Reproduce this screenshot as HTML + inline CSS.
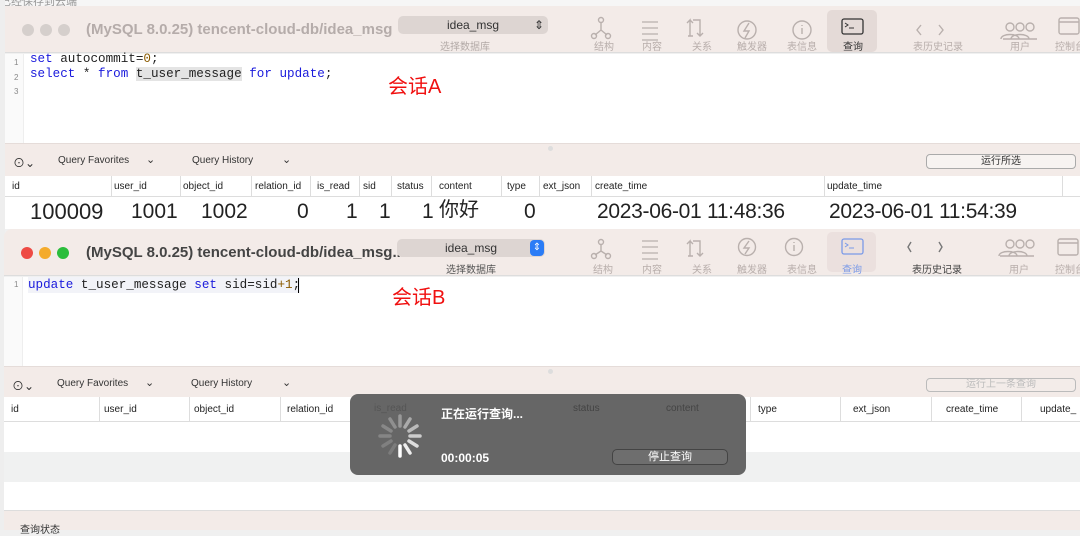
<!DOCTYPE html>
<html><head><meta charset="utf-8"><style>
*{margin:0;padding:0;box-sizing:border-box}
body{width:1080px;height:530px;overflow:hidden;background:#f0f0f0;position:relative;font-family:"Liberation Sans","Noto Sans CJK SC",sans-serif;color:#222}
.a{position:absolute}
.tb{background:#f3ebe8}
.mono{font-family:"Liberation Mono",monospace;font-size:12.6px}
.kw{color:#1a1adc}
.num{color:#8a5a00}
.lbl{font-size:10px;color:#b8aeab;text-align:center;width:50px}
.hdr{font-size:10px;color:#222;top:0;line-height:21px}
.sep{border-left:1px solid #ddd;height:21px;top:0}
.ic{stroke:#b9b0ad;fill:none;stroke-width:1.4}
.big{font-size:21px;color:#222;top:3px}
</style></head><body>
<div class="a" style="left:0;top:0;width:1080px;height:6px;background:#f6f6f6"></div>
<div class="a" style="left:0;top:-7px;font-size:11px;color:#999">已经保存到云端</div>
<div class="a" style="left:0;top:0;width:5px;height:530px;background:#eee"></div>

<div class="a tb" style="left:5px;top:6px;width:1075px;height:47px;border-bottom:1px solid #ddd"></div>
<div class="a" style="left:22px;top:24px;width:12px;height:12px;border-radius:6px;background:#d5cfcc"></div>
<div class="a" style="left:40px;top:24px;width:12px;height:12px;border-radius:6px;background:#d5cfcc"></div>
<div class="a" style="left:58px;top:24px;width:12px;height:12px;border-radius:6px;background:#d5cfcc"></div>
<div class="a" style="left:86px;top:21px;font-size:15px;font-weight:bold;color:#b5acaa">(MySQL 8.0.25) tencent-cloud-db/idea_msg</div>
<div class="a" style="left:398px;top:16px;width:150px;height:18px;border-radius:5px;background:#ddd5d2;font-size:12px;text-align:center;line-height:18px;color:#333">idea_msg<span style="position:absolute;right:4px;top:0">⇕</span></div>
<div class="a" style="left:440px;top:38px;font-size:10px;color:#b3aaa7">选择数据库</div>

<div class="a" style="left:5px;top:54px;width:1075px;height:89px;background:#fff"></div>
<div class="a" style="left:5px;top:54px;width:19px;height:89px;background:#fafafa;border-right:1px solid #eee"></div>
<div class="a" style="left:14px;top:56px;font-size:8px;color:#888;line-height:14.5px">1<br>2<br>3</div>
<div class="a mono" style="left:30px;top:52px;line-height:15px">
<span class="kw">set</span> autocommit=<span class="num">0</span>;<br>
<span class="kw">select</span> * <span class="kw">from</span> <span style="background:#e4e4e4">t_user_message</span> <span class="kw">for</span> <span class="kw">update</span>;</div>
<div class="a" style="left:388px;top:70px;font-size:20px;color:#f01010">会话A</div>

<div class="a tb" style="left:5px;top:143px;width:1075px;height:33px;border-top:1px solid #e5dcd9"></div>
<div class="a" style="left:548px;top:146px;width:5px;height:5px;border-radius:3px;background:#ddd"></div>
<div class="a" style="left:13px;top:154px;font-size:12px;color:#333">⊙⌄</div>
<div class="a" style="left:58px;top:155px;font-size:10px;color:#333">Query Favorites</div>
<div class="a" style="left:146px;top:153px;font-size:11px;color:#333">⌄</div>
<div class="a" style="left:192px;top:155px;font-size:10px;color:#333">Query History</div>
<div class="a" style="left:282px;top:153px;font-size:11px;color:#333">⌄</div>
<div class="a" style="left:926px;top:154px;width:150px;height:15px;border:1px solid #aaa;border-radius:4px;background:#f7f3f1;font-size:10px;text-align:center;line-height:13px;color:#333">运行所选</div>

<div class="a" style="left:5px;top:176px;width:1075px;height:21px;background:#fff;border-bottom:1px solid #ddd">
<div class="a hdr" style="left:7px">id</div>
<div class="a sep" style="left:106px"></div><div class="a hdr" style="left:109px">user_id</div>
<div class="a sep" style="left:175px"></div><div class="a hdr" style="left:178px">object_id</div>
<div class="a sep" style="left:246px"></div><div class="a hdr" style="left:250px">relation_id</div>
<div class="a sep" style="left:305px"></div><div class="a hdr" style="left:312px">is_read</div>
<div class="a sep" style="left:354px"></div><div class="a hdr" style="left:358px">sid</div>
<div class="a sep" style="left:386px"></div><div class="a hdr" style="left:392px">status</div>
<div class="a sep" style="left:426px"></div><div class="a hdr" style="left:434px">content</div>
<div class="a sep" style="left:496px"></div><div class="a hdr" style="left:502px">type</div>
<div class="a sep" style="left:534px"></div><div class="a hdr" style="left:538px">ext_json</div>
<div class="a sep" style="left:586px"></div><div class="a hdr" style="left:590px">create_time</div>
<div class="a sep" style="left:819px"></div><div class="a hdr" style="left:822px">update_time</div>
<div class="a sep" style="left:1057px"></div>
</div>
<div class="a" style="left:5px;top:197px;width:1075px;height:32px;background:#fff">
<div class="a big" style="left:25px;font-size:22px;top:2px">100009</div>
<div class="a big" style="left:126px">1001</div>
<div class="a big" style="left:196px">1002</div>
<div class="a big" style="left:292px">0</div>
<div class="a big" style="left:341px">1</div>
<div class="a big" style="left:374px">1</div>
<div class="a big" style="left:417px">1</div>
<div class="a big" style="left:434px;font-size:20px;top:0px;line-height:26px">你好</div>
<div class="a big" style="left:519px">0</div>
<div class="a big" style="left:592px;letter-spacing:-0.3px">2023-06-01 11:48:36</div>
<div class="a big" style="left:824px;letter-spacing:-0.3px">2023-06-01 11:54:39</div>
</div>

<svg class="a" style="left:540px;top:6px" width="540" height="47">
<g class="ic">
<circle cx="61" cy="14" r="2.5"/><circle cx="54" cy="30" r="2.5"/><circle cx="68" cy="30" r="2.5"/><path d="M61 16v8M61 24l-6 5M61 24l6 5"/>
<path d="M102 16h16M102 22h16M102 28h16M102 34h16" stroke-width="1.2"/>
<path d="M150 30v-16l-3 3M150 14l3 3M153 14h7v16M157 27l3 3l3-3M148 30h5"/>
<circle cx="207" cy="24" r="9"/><path d="M209 17l-5 8h5l-4 7"/>
<circle cx="262" cy="24" r="9"/><path d="M262 22v6M262 19v1"/>
</g>
<rect x="287" y="4" width="50" height="42" rx="5" fill="#e4dad7"/>
<rect x="302" y="13" width="21" height="15" rx="2" fill="none" stroke="#333" stroke-width="1.3"/><path d="M305 17l3 2l-3 2M309 22h5" stroke="#333" fill="none"/>
<path d="M381 19l-4 5l4 5M399 19l4 5l-4 5" class="ic"/>
<g class="ic"><circle cx="470" cy="21" r="4"/><circle cx="480" cy="21" r="4"/><circle cx="490" cy="21" r="4"/><path d="M461 33c0-6 18-6 18 0M471 33c0-6 18-6 18 0M463 33h34"/>
<rect x="519" y="12" width="20" height="16" rx="2"/><path d="M519 16h20"/></g>
</svg>
<div class="a lbl" style="left:579px;top:38px">结构</div>
<div class="a lbl" style="left:627px;top:38px">内容</div>
<div class="a lbl" style="left:677px;top:38px">关系</div>
<div class="a lbl" style="left:727px;top:38px">触发器</div>
<div class="a lbl" style="left:777px;top:38px">表信息</div>
<div class="a lbl" style="left:828px;top:38px;color:#333">查询</div>
<div class="a lbl" style="left:898px;top:38px;width:80px">表历史记录</div>
<div class="a lbl" style="left:995px;top:38px">用户</div>
<div class="a lbl" style="left:1045px;top:38px">控制台</div>

<div class="a tb" style="left:4px;top:229px;width:1076px;height:47px;border-top-left-radius:8px;border-bottom:1px solid #ddd"></div>
<div class="a" style="left:21px;top:247px;width:12px;height:12px;border-radius:6px;background:#ee4a44"></div>
<div class="a" style="left:39px;top:247px;width:12px;height:12px;border-radius:6px;background:#f4ab2c"></div>
<div class="a" style="left:57px;top:247px;width:12px;height:12px;border-radius:6px;background:#2bbd3c"></div>
<div class="a" style="left:86px;top:244px;font-size:15px;font-weight:bold;color:#444">(MySQL 8.0.25) tencent-cloud-db/idea_msg...</div>
<div class="a" style="left:397px;top:239px;width:148px;height:18px;border-radius:5px;background:#ddd5d2;font-size:12px;text-align:center;line-height:18px;color:#333">idea_msg<span style="position:absolute;right:1px;top:1px;width:14px;height:16px;background:#2a7cf6;border-radius:4px;color:#fff;font-size:10px;line-height:16px">⇕</span></div>
<div class="a" style="left:446px;top:261px;font-size:10px;color:#555">选择数据库</div>

<div class="a" style="left:4px;top:277px;width:1076px;height:89px;background:#fff"></div>
<div class="a" style="left:4px;top:277px;width:19px;height:89px;background:#fafafa;border-right:1px solid #eee"></div>
<div class="a" style="left:14px;top:280px;font-size:8px;color:#888">1</div>
<div class="a mono" style="left:28px;top:277px;line-height:16px;background:#f2f3f8"><span class="kw">update</span> t_user_message <span class="kw">set</span> sid=sid<span class="num">+1</span>;</div>
<div class="a" style="left:298px;top:278px;width:1px;height:15px;background:#000"></div>
<div class="a" style="left:392px;top:281px;font-size:20px;color:#f01010">会话B</div>

<div class="a tb" style="left:4px;top:366px;width:1076px;height:31px;border-top:1px solid #e5dcd9"></div>
<div class="a" style="left:548px;top:369px;width:5px;height:5px;border-radius:3px;background:#ddd"></div>
<div class="a" style="left:12px;top:377px;font-size:12px;color:#333">⊙⌄</div>
<div class="a" style="left:57px;top:378px;font-size:10px;color:#333">Query Favorites</div>
<div class="a" style="left:145px;top:376px;font-size:11px;color:#333">⌄</div>
<div class="a" style="left:191px;top:378px;font-size:10px;color:#333">Query History</div>
<div class="a" style="left:282px;top:376px;font-size:11px;color:#333">⌄</div>
<div class="a" style="left:926px;top:378px;width:150px;height:14px;border:1px solid #bbb;border-radius:4px;background:#f3ece9;font-size:10px;text-align:center;line-height:12px;color:#bbb">运行上一条查询</div>

<div class="a" style="left:4px;top:397px;width:1076px;height:25px;background:#fff;border-bottom:1px solid #ddd">
<div class="a hdr" style="left:7px;line-height:25px">id</div>
<div class="a sep" style="left:95px;height:25px"></div><div class="a hdr" style="left:100px;line-height:25px">user_id</div>
<div class="a sep" style="left:185px;height:25px"></div><div class="a hdr" style="left:190px;line-height:25px">object_id</div>
<div class="a sep" style="left:276px;height:25px"></div><div class="a hdr" style="left:283px;line-height:25px">relation_id</div>
<div class="a sep" style="left:746px;height:25px"></div><div class="a hdr" style="left:754px;line-height:25px">type</div>
<div class="a sep" style="left:836px;height:25px"></div><div class="a hdr" style="left:849px;line-height:25px">ext_json</div>
<div class="a sep" style="left:927px;height:25px"></div><div class="a hdr" style="left:942px;line-height:25px">create_time</div>
<div class="a sep" style="left:1017px;height:25px"></div><div class="a hdr" style="left:1036px;line-height:25px">update_</div>
</div>
<div class="a" style="left:4px;top:422px;width:1076px;height:30px;background:#fff"></div>
<div class="a" style="left:4px;top:452px;width:1076px;height:30px;background:#f0f1f1"></div>
<div class="a" style="left:4px;top:482px;width:1076px;height:29px;background:#fff;border-bottom:1px solid #ddd"></div>
<div class="a tb" style="left:4px;top:511px;width:1076px;height:19px"></div>
<div class="a" style="left:20px;top:521px;font-size:10px;color:#333">查询状态</div>

<div class="a" style="left:350px;top:394px;width:396px;height:81px;background:#666;border-radius:8px">
<div class="a" style="left:24px;top:9px;font-size:10px;color:#555">is_read</div>
<div class="a" style="left:223px;top:9px;font-size:10px;color:#444">status</div>
<div class="a" style="left:316px;top:9px;font-size:10px;color:#444">content</div>
<div class="a" style="left:91px;top:11px;font-size:12px;font-weight:bold;color:#fff">正在运行查询...</div>
<div class="a" style="left:91px;top:57px;font-size:12px;font-weight:bold;color:#fff">00:00:05</div>
<div class="a" style="left:262px;top:55px;width:116px;height:16px;border:1px solid #444;border-radius:5px;background:#6e6e6e;font-size:11px;text-align:center;line-height:14px;color:#fff">停止查询</div>
<svg class="a" style="left:20px;top:14px" width="60" height="60">
<g stroke-linecap="round" stroke-width="3.5">
<path d="M30 38v10" stroke="#fff"/>
<path d="M35 37l5 8" stroke="#eee"/>
<path d="M39 33l8 5" stroke="#ddd"/>
<path d="M40 28h10" stroke="#ccc"/>
<path d="M39 23l8-5" stroke="#bbb"/>
<path d="M35 19l5-8" stroke="#aaa"/>
<path d="M30 18v-10" stroke="#999"/>
<path d="M25 19l-5-8" stroke="#8f8f8f"/>
<path d="M21 23l-8-5" stroke="#888"/>
<path d="M20 28h-10" stroke="#858585"/>
<path d="M21 33l-8 5" stroke="#808080"/>
<path d="M25 37l-5 8" stroke="#7c7c7c"/>
</g></svg>
</div>

<svg class="a" style="left:540px;top:229px" width="540" height="47">
<g class="ic">
<circle cx="61" cy="13" r="2.5"/><circle cx="54" cy="27" r="2.5"/><circle cx="68" cy="27" r="2.5"/><path d="M61 15v7M61 22l-6 4M61 22l6 4"/>
<path d="M102 12h16M102 18h16M102 24h16M102 30h16" stroke-width="1.2"/>
<path d="M150 27v-15l-3 3M150 12l3 3M153 12h7v15M157 24l3 3l3-3M148 27h5"/>
<circle cx="207" cy="18" r="8.5"/><path d="M209 12l-5 7h5l-4 6"/>
<circle cx="254" cy="18" r="8.5"/><path d="M254 16v6M254 13v1"/>
</g>
<rect x="287" y="3" width="49" height="40" rx="5" fill="#ebe0de"/>
<rect x="302" y="10" width="21" height="15" rx="2" fill="none" stroke="#7a9ae8" stroke-width="1.3"/><path d="M305 14l3 2l-3 2M309 19h5" stroke="#7a9ae8" fill="none"/>
<path d="M371 13l-3 5l3 5M399 13l3 5l-3 5" class="ic" style="stroke:#777"/>
<g class="ic"><circle cx="470" cy="15" r="4"/><circle cx="480" cy="15" r="4"/><circle cx="490" cy="15" r="4"/><path d="M459 27c0-6 18-6 18 0M469 27c0-6 18-6 18 0M460 27h34"/>
<rect x="518" y="10" width="20" height="16" rx="2"/><path d="M518 14h20"/></g>
</svg>
<div class="a lbl" style="left:578px;top:261px">结构</div>
<div class="a lbl" style="left:627px;top:261px">内容</div>
<div class="a lbl" style="left:677px;top:261px">关系</div>
<div class="a lbl" style="left:727px;top:261px">触发器</div>
<div class="a lbl" style="left:777px;top:261px">表信息</div>
<div class="a lbl" style="left:827px;top:261px;color:#7a9ae8">查询</div>
<div class="a lbl" style="left:897px;top:261px;width:80px;color:#444">表历史记录</div>
<div class="a lbl" style="left:994px;top:261px">用户</div>
<div class="a lbl" style="left:1045px;top:261px">控制台</div>
</body></html>
